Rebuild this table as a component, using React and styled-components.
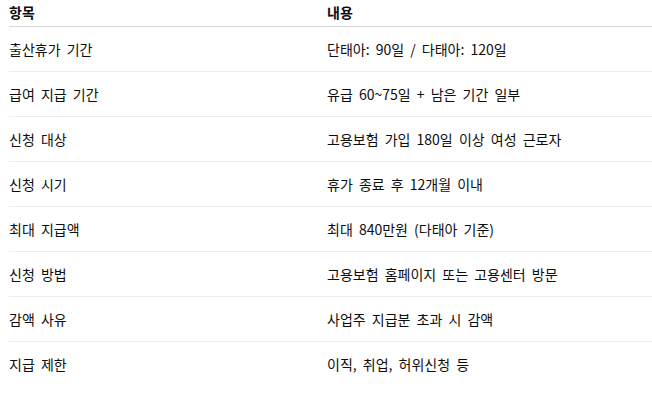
import styled, { createGlobalStyle } from 'styled-components'

const GlobalStyle = createGlobalStyle`
    html, body {
        margin: 0;
        padding: 0;
        background: #fff;
    }
    body {
        font-family: "Noto Sans CJK KR", "Noto Sans", sans-serif;
        color: #0d0d0d;
    }
`

const rows = [
    ['출산휴가 기간', '단태아: 90일 / 다태아: 120일'],
    ['급여 지급 기간', '유급 60~75일 + 남은 기간 일부'],
    ['신청 대상', '고용보험 가입 180일 이상 여성 근로자'],
    ['신청 시기', '휴가 종료 후 12개월 이내'],
    ['최대 지급액', '최대 840만원 (다태아 기준)'],
    ['신청 방법', '고용보험 홈페이지 또는 고용센터 방문'],
    ['감액 사유', '사업주 지급분 초과 시 감액'],
    ['지급 제한', '이직, 취업, 허위신청 등'],
]

const App = () => {
    return (
        <>
            <GlobalStyle />
            <Wrapper>
                <Table>
                    <thead>
                        <HeadRow>
                            <HeadCell>항목</HeadCell>
                            <HeadCell>내용</HeadCell>
                        </HeadRow>
                    </thead>
                    <tbody>
                        {rows.map((r, i) => (
                            <Row key={i} $last={i === rows.length - 1}>
                                <Cell>{r[0]}</Cell>
                                <Cell>{r[1]}</Cell>
                            </Row>
                        ))}
                    </tbody>
                </Table>
            </Wrapper>
        </>
    )
}

export default App

const Wrapper = styled.div`
    padding-left: 9px;
`

const Table = styled.table`
    width: 100%;
    border-collapse: collapse;
    font-size: 14px;
    line-height: 20px;
    word-spacing: 3px;
    table-layout: fixed;
`

const HeadRow = styled.tr`
    border-bottom: 1px solid #d9d9d9;
`

const HeadCell = styled.th`
    text-align: left;
    font-weight: 700;
    padding: 2px 0 4px 0;
    height: 20px;
    &:first-child { width: 318px; }
`

const Row = styled.tr`
    border-bottom: ${p => p.$last ? 'none' : '1px solid #ececec'};
`

const Cell = styled.td`
    padding: 12px 0;
    height: 20px;
    vertical-align: middle;
`
